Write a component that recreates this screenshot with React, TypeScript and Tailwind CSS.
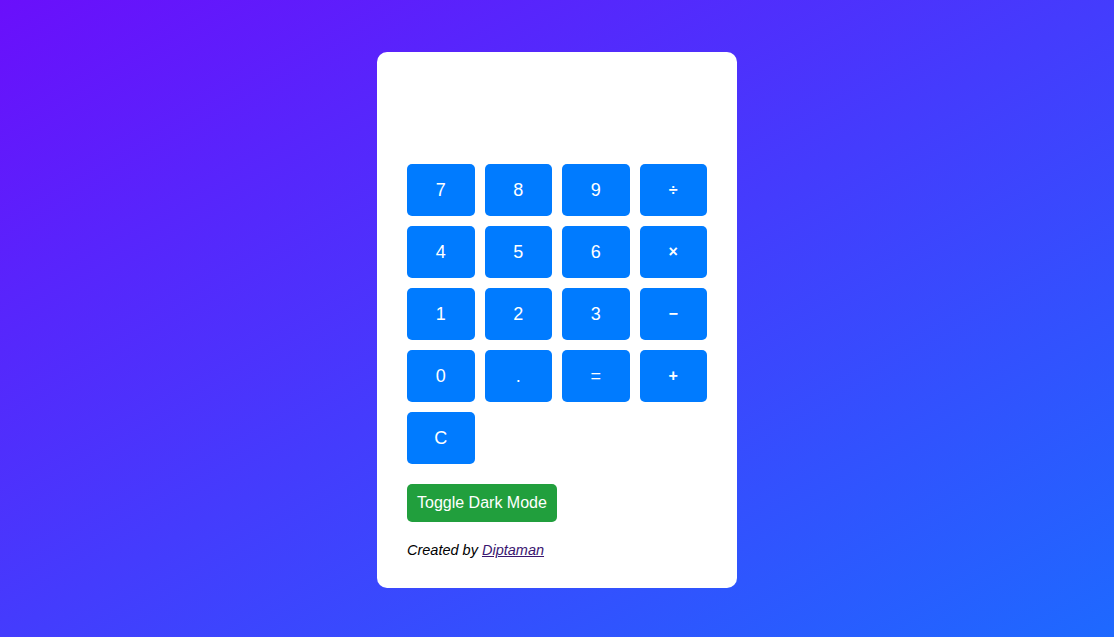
const keys = ["7", "8", "9", "÷", "4", "5", "6", "×", "1", "2", "3", "−", "0", ".", "=", "+", "C"];
const ops = ["÷", "×", "−", "+"];

export default function App() {
  return (
    <div className="min-h-screen w-full flex justify-center items-start pt-[52px] bg-linear-to-br/srgb from-[#6a0ffb] to-[#1e69ff] font-['Liberation_Sans',Arial,sans-serif]">
      <div className="w-[360px] bg-white rounded-[10px] p-[30px] flex flex-col">
        {/* display */}
        <div className="h-[72px] mb-[10px]" />

        <div className="grid grid-cols-4 gap-[10px]">
          {keys.map((k) => (
            <button
              key={k}
              className={`h-[52px] rounded-[5px] bg-[#007bff] text-white flex items-center justify-center ${
                ops.includes(k) ? "text-[16px] font-bold" : "text-[18px]"
              }`}
            >
              {k}
            </button>
          ))}
        </div>

        <div className="mt-[20px]">
          <button className="h-[38px] px-[10px] rounded-[5px] bg-[#219f3d] text-white text-[16px]">
            Toggle Dark Mode
          </button>
        </div>

        <p className="mt-[20px] text-[14.5px] italic text-black leading-[16px]">
          Created by{" "}
          <a href="#" className="underline text-[#3a1670]">
            Diptaman
          </a>
        </p>
      </div>
    </div>
  );
}
